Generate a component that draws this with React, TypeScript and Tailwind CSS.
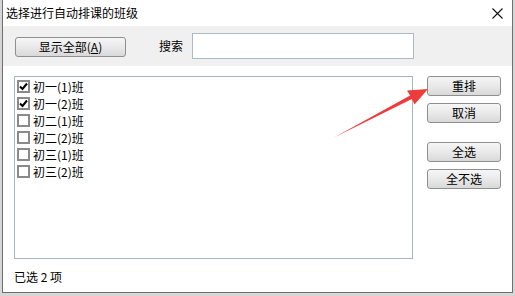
import { useState } from 'react';

const classes = [
  { name: '初一(1)班', checked: true },
  { name: '初一(2)班', checked: true },
  { name: '初二(1)班', checked: false },
  { name: '初二(2)班', checked: false },
  { name: '初三(1)班', checked: false },
  { name: '初三(2)班', checked: false },
];

const font = { fontFamily: '"Noto Sans CJK SC", "Liberation Sans", sans-serif' };

const WinButton = ({ label, className = '' }: { label: React.ReactNode; className?: string }) => (
  <button
    className={`h-[20px] rounded-[3px] border border-[#8e8f8f] bg-gradient-to-b from-[#f6f6f6] via-[#e9e9e9] to-[#d9d9d9] text-[12px] leading-none text-black flex items-center justify-center ${className}`}
  >
    {label}
  </button>
);

const CheckBox = ({ checked }: { checked: boolean }) => (
  <div className="w-[13px] h-[13px] border-2 border-[#8a8a8a] bg-white flex items-center justify-center shrink-0">
    {checked && (
      <svg width="9" height="9" viewBox="0 0 9 9">
        <path d="M1 4.5 L3.5 7 L8 1.5" stroke="#000" strokeWidth="2" fill="none" />
      </svg>
    )}
  </div>
);

export default function App() {
  const [items] = useState(classes);
  const count = items.filter((i) => i.checked).length;

  return (
    <div className="relative w-[515px] h-[296px] bg-[#d6d6d6] overflow-hidden" style={font}>
      <div className="ml-[2px] w-[511px] h-[293px] bg-white border-x border-b border-[#6e6e6e] flex flex-col">
        {/* title bar */}
        <div className="h-[26px] bg-white flex items-center justify-between pl-[3px] pr-[9px]">
          <span className="text-[12px] text-black">选择进行自动排课的班级</span>
          <svg width="11" height="11" viewBox="0 0 11 11">
            <path d="M0.5 0.5 L10.5 10.5 M10.5 0.5 L0.5 10.5" stroke="#111" strokeWidth="1.1" />
          </svg>
        </div>

        {/* toolbar */}
        <div className="h-[40px] bg-[#f0f0f0] flex items-center pl-[12px]">
          <WinButton
            label={
              <span>
                显示全部(<span className="underline">A</span>)
              </span>
            }
            className="w-[111px] mt-[2px]"
          />
          <span className="ml-[33px] text-[12px] text-black">搜索</span>
          <div className="ml-[9px] w-[222px] h-[26px] bg-white border border-[#a9bac8]" />
        </div>

        {/* body */}
        <div className="flex-1 flex flex-col pl-[11px] pt-[10px]">
          <div className="flex gap-[14px]">
            <div className="w-[399px] h-[183px] border border-[#a5b4bf] bg-white pt-[1px] pl-[2px]">
              {items.map((item) => (
                <div key={item.name} className="h-[17px] flex items-center gap-[3px]">
                  <CheckBox checked={item.checked} />
                  <span className="text-[12px] text-black leading-none">{item.name}</span>
                </div>
              ))}
            </div>
            <div className="flex flex-col w-[74px]">
              <WinButton label="重排" className="w-full" />
              <WinButton label="取消" className="w-full mt-[7px]" />
              <WinButton label="全选" className="w-full mt-[19px]" />
              <WinButton label="全不选" className="w-full mt-[7px]" />
            </div>
          </div>
          <div className="mt-[9px] text-[12px] text-black whitespace-pre">已选 {count} 项</div>
        </div>
      </div>

      {/* annotation arrow */}
      <svg className="absolute inset-0 pointer-events-none" width="515" height="296">
        <polygon
          points="334,137.5 411.9,99 414.5,104.5 428,89 407,90.5 410.1,95.4"
          fill="#ee3b3b"
        />
      </svg>
    </div>
  );
}
